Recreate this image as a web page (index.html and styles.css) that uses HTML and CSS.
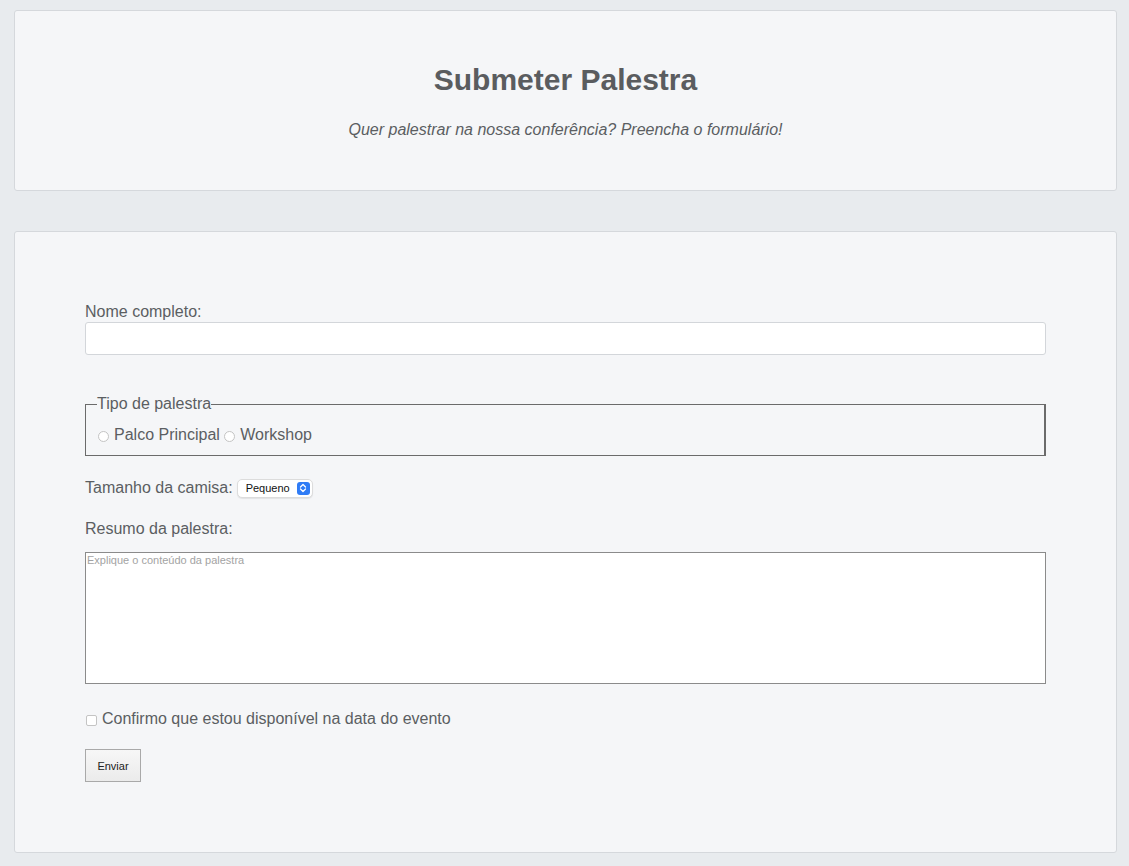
FILE: index.html
```html
<!DOCTYPE html>
<html lang="pt">
<head>
<meta charset="utf-8">
<title>Submeter Palestra</title>
<link rel="stylesheet" href="styles.css">
</head>
<body>
<div class="page">
  <header class="card header">
    <h1 class="title">Submeter Palestra</h1>
    <p class="subtitle">Quer palestrar na nossa conferência? Preencha o formulário!</p>
  </header>
  <main class="card form-card">
    <form class="form">
      <label class="label" for="nome">Nome completo:</label>
      <input class="text-input" id="nome" type="text">

      <fieldset class="fieldset">
        <legend class="legend">Tipo de palestra</legend>
        <label class="choice"><span class="radio"></span>Palco Principal</label>
        <label class="choice"><span class="radio"></span>Workshop</label>
      </fieldset>

      <div class="row shirt">
        <span class="label-inline">Tamanho da camisa:</span>
        <span class="select">Pequeno<span class="select-arrow"><svg width="8" height="10" viewBox="0 0 8 10"><path d="M1.5 4 L4 1.5 L6.5 4 M1.5 6 L4 8.5 L6.5 6" fill="none" stroke="#fff" stroke-width="1.3" stroke-linecap="round" stroke-linejoin="round"/></svg></span></span>
      </div>

      <div class="label resumo-label">Resumo da palestra:</div>
      <div class="textarea"><span class="placeholder">Explique o conteúdo da palestra</span></div>

      <label class="row confirm"><span class="checkbox"></span>Confirmo que estou disponível na data do evento</label>

      <div class="button-row"><span class="button">Enviar</span></div>
    </form>
  </main>
</div>
</body>
</html>
```

FILE: styles.css
```css
* { box-sizing: border-box; }
html, body { margin: 0; padding: 0; }
body {
  background: #e8ebee;
  font-family: "Liberation Sans", Arial, Helvetica, sans-serif;
  color: #5b5e62;
  font-size: 16px;
  line-height: 18px;
}
.page {
  padding: 10px 12px 14px 14px;
}
.card {
  background: #f5f6f8;
  border: 1px solid #d5d8dc;
  border-radius: 3px;
}
.header {
  height: 181px;
  padding: 53px 20px 0;
  text-align: center;
}
.title {
  margin: 0;
  font-size: 30px;
  line-height: 32px;
  font-weight: bold;
  color: #5a5c5f;
}
.subtitle {
  margin: 25px 0 0;
  font-style: italic;
  font-size: 16px;
  line-height: 18px;
}
.form-card {
  margin-top: 40px;
  padding: 71px 70px 70px 70px;
}
.form {
  display: block;
}
.label {
  display: block;
}
.text-input {
  display: block;
  width: 100%;
  height: 33px;
  margin-top: 1px;
  background: #fff;
  border: 1px solid #d3d6da;
  border-radius: 3px;
  font: inherit;
}
.fieldset {
  margin: 40px 0 0;
  padding: 13px 12px 0;
  border: 1px solid #6b6b6b;
  border-right-width: 2px;
  height: 61px;
}
.legend {
  padding: 0;
  margin-left: -1px;
  line-height: 18px;
}
.choice {
  display: inline-flex;
  align-items: center;
}
.radio {
  width: 11px;
  height: 11px;
  border: 1px solid #c4c4c4;
  border-radius: 50%;
  background: #fff;
  margin-right: 5px;
  margin-top: 2px;
}
.row {
  display: flex;
  align-items: center;
}
.shirt {
  margin-top: 22px;
  height: 19px;
}
.label-inline { margin-right: 4px; }
.select {
  display: inline-flex;
  align-items: center;
  justify-content: space-between;
  width: 76px;
  height: 19px;
  padding: 0 2px 0 8px;
  background: #fff;
  border: 1px solid #dcdcdc;
  border-radius: 5px;
  box-shadow: 0 1px 1px rgba(0,0,0,0.08);
  color: #111;
  font-size: 11px;
  margin-top: 1px;
}
.select-arrow {
  display: inline-flex;
  align-items: center;
  justify-content: center;
  width: 13px;
  height: 13px;
  border-radius: 3px;
  background: #2f7cf6;
}
.resumo-label {
  margin-top: 23px;
}
.textarea {
  margin-top: 14px;
  height: 132px;
  background: #fff;
  border: 1px solid #8b8b8b;
  padding: 1px 1px;
}
.placeholder {
  display: block;
  font-size: 11px;
  line-height: 12px;
  color: #a3a3a3;
}
.confirm {
  margin-top: 26px;
}
.checkbox {
  width: 11px;
  height: 11px;
  border: 1px solid #c4c4c4;
  border-radius: 2px;
  background: #fff;
  margin: 2px 5px 0 1px;
}
.button-row {
  margin-top: 21px;
  display: flex;
}
.button {
  display: inline-flex;
  align-items: center;
  justify-content: center;
  width: 56px;
  height: 33px;
  border: 1px solid #a9a9a9;
  background: linear-gradient(#f7f7f7, #ebebeb);
  color: #222;
  font-size: 11px;
}
```
